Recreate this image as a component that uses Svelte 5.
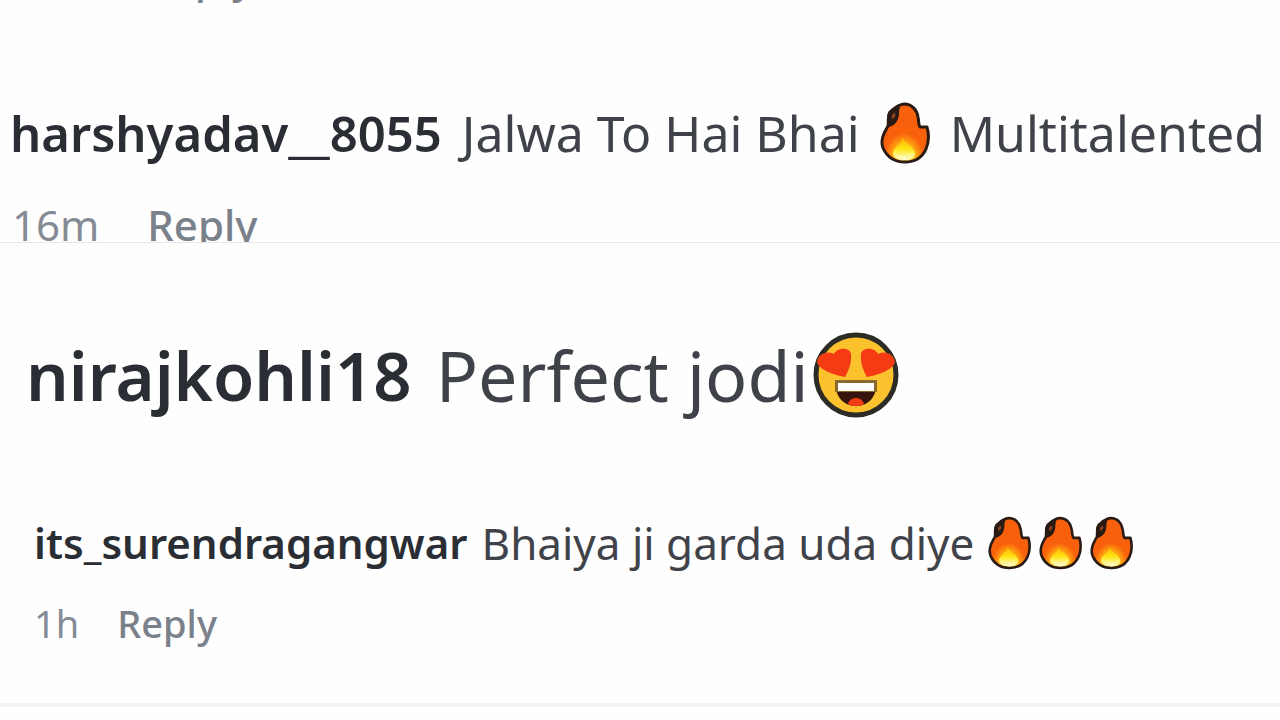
<script lang="ts">
	type Comment = {
		user: string;
		text: string;
		emoji?: 'fire' | 'love';
		count?: number;
		after?: string;
		time?: string;
		size: 'medium' | 'large' | 'small';
	};

	const comments: Comment[] = [
		{
			user: 'harshyadav__8055',
			text: 'Jalwa To Hai Bhai',
			emoji: 'fire',
			count: 1,
			after: 'Multitalented',
			time: '16m',
			size: 'medium'
		},
		{ user: 'nirajkohli18', text: 'Perfect jodi', emoji: 'love', count: 1, size: 'large' },
		{
			user: 'its_surendragangwar',
			text: 'Bhaiya ji garda uda diye',
			emoji: 'fire',
			count: 3,
			time: '1h',
			size: 'small'
		}
	];
</script>

{#snippet fire()}
	<svg class="fire" viewBox="0 0 50 62" role="img" aria-label="fire">
		<defs>
			<radialGradient id="flame" cx="0.48" cy="0.92" r="0.42">
				<stop offset="0" stop-color="#fff27a" />
				<stop offset="0.35" stop-color="#ffe02a" />
				<stop offset="0.65" stop-color="#ffa010" />
				<stop offset="1" stop-color="#f8600c" />
			</radialGradient>
			<linearGradient id="core" x1="0" y1="0" x2="0" y2="1">
				<stop offset="0" stop-color="#ffb400" />
				<stop offset="0.5" stop-color="#ffe614" />
				<stop offset="1" stop-color="#fffce0" />
			</linearGradient>
		</defs>
		<path
			d="M24 2C32 2 37 8 38 15C39 19 38 22 40 25L47 25C49 32 49 40 46 47C42 56 34 60 25 60C15 60 7 55 3 46C0 38 4 31 8 24C9 18 7 14 10 10C13 8 16 3 24 2Z"
			fill="url(#flame)"
			stroke="#2a1a14"
			stroke-width="3"
			stroke-linejoin="round"
		/>
		<path d="M21 3C16 4 13 7 9 10C6 14 8 19 7 25C12 25 16 22 18 17C20 12 18 8 21 3Z" fill="#2a1a14" />
		<path d="M14 11C17 12 15 16 12 17C11 15 12 12 14 11Z" fill="#8a4520" />
		<path d="M23 36C25 42 31 43 35 50C36 55 31 58 25 58C18 58 12 55 13 50C16 44 21 42 23 36Z" fill="url(#core)" />
	</svg>
{/snippet}

{#snippet love()}
	<svg class="love" viewBox="0 0 86 86" role="img" aria-label="heart eyes">
		<circle cx="43" cy="43" r="40" fill="#fbc22d" stroke="#2d2b25" stroke-width="5" />
		<path
			d="M32 45C20 43 5 37 4 30C5 22 14 18 21 22C24 15 37 15 38 22C39 31 35 40 32 45Z"
			fill="#f43b13"
		/>
		<path
			d="M54 45C66 43 81 37 82 30C81 22 72 18 65 22C62 15 49 15 48 22C47 31 51 40 54 45Z"
			fill="#f43b13"
		/>
		<path d="M22 49H64C64 64 56 74 43 74C30 74 22 64 22 49Z" fill="#34140d" />
		<path d="M22 48H64V60H22Z" fill="#8a6a2c" />
		<path d="M25 51H61V59H25Z" fill="#fff" />
		<path d="M35 72C37 64 49 64 51 72C46 75 40 75 35 72Z" fill="#ef3b17" />
	</svg>
{/snippet}

{#snippet comment(c: Comment)}
	<article class="comment {c.size}">
		<p>
			<a href="#{c.user}">{c.user}</a>
			<span>{c.text}</span>
			{#if c.emoji}
				<span class="emojis">
					{#each { length: c.count ?? 1 } as _}
						{#if c.emoji === 'fire'}
							{@render fire()}
						{:else}
							{@render love()}
						{/if}
					{/each}
				</span>
			{/if}
			{#if c.after}
				<span>{c.after}</span>
			{/if}
		</p>
		{#if c.time}
			<div class="meta">
				<time>{c.time}</time>
				<button type="button">Reply</button>
			</div>
		{/if}
	</article>
{/snippet}

<main>
	<section class="cropped">
		<div class="meta previous">
			<button type="button">Reply</button>
		</div>
		{@render comment(comments[0])}
	</section>
	<section class="rest">
		{@render comment(comments[1])}
		{@render comment(comments[2])}
	</section>
</main>

<style>
	:global(body) {
		margin: 0;
		background-color: #fefefe;
	}
	main {
		font-family: 'Segoe UI', 'Noto Sans', 'Open Sans', sans-serif;
		color: #3f4349;
		overflow: hidden;
	}
	.cropped {
		overflow: hidden;
		border-bottom: 1px solid #e8e8e8;
	}
	.rest {
		padding-top: 82px;
		border-bottom: 4px solid #f4f4f4;
	}
	p {
		display: flex;
		align-items: center;
		margin: 0;
		white-space: nowrap;
	}
	a {
		color: #2a2e34;
		font-weight: 600;
		text-decoration: none;
	}
	.emojis {
		display: flex;
	}
	svg {
		display: block;
	}
	.meta {
		display: flex;
		color: #858b94;
	}
	button {
		padding: 0;
		border: 0;
		background: none;
		color: #7a818b;
		font: inherit;
		font-weight: 500;
		cursor: pointer;
	}

	.cropped .meta {
		gap: 48px;
		padding-left: 12px;
		font-size: 42px;
		line-height: 56px;
	}
	/* only the descenders of the comment above are in view */
	.cropped .previous {
		margin-top: -51px;
		padding-left: 144px;
	}
	.medium {
		padding-top: 94px;
		margin-bottom: -11px;
	}
	.medium p {
		gap: 20px;
		padding-left: 10px;
		font-size: 50px;
		line-height: 68px;
	}
	.medium a {
		font-size: 49px;
	}
	.medium .meta {
		margin-top: 30px;
	}
	.medium .fire {
		width: 50px;
		height: 62px;
	}

	.large p {
		gap: 24px;
		padding-left: 26px;
		font-size: 70px;
		line-height: 100px;
	}
	.large a {
		font-size: 67px;
	}
	.large .emojis {
		margin-left: -20px;
	}
	.love {
		width: 86px;
		height: 86px;
	}

	.small {
		padding: 82px 0 52px 34px;
	}
	.small p {
		gap: 14px;
		font-size: 44px;
		line-height: 72px;
	}
	.small a {
		font-size: 42px;
	}
	.small .emojis {
		gap: 8px;
	}
	.small .fire {
		width: 43px;
		height: 54px;
	}
	.small .meta {
		gap: 38px;
		margin-top: 16px;
		font-size: 38px;
		line-height: 56px;
	}
</style>
